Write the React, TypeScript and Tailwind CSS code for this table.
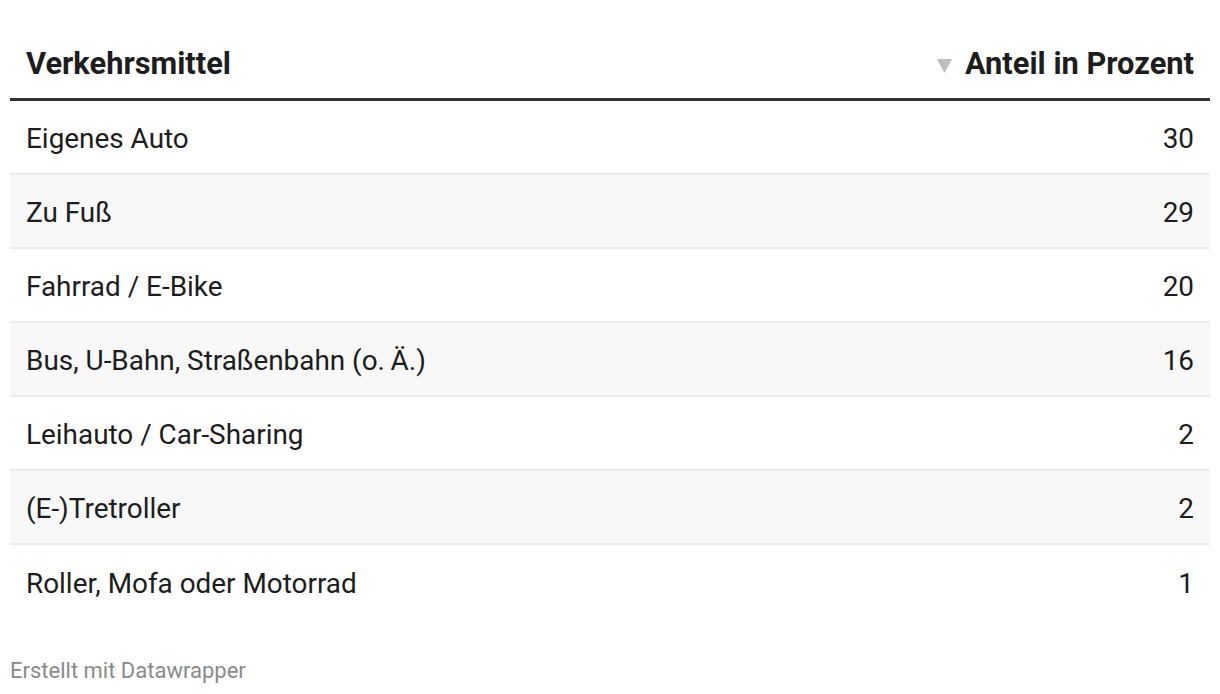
const rows: { name: string; value: number }[] = [
  { name: "Eigenes Auto", value: 30 },
  { name: "Zu Fuß", value: 29 },
  { name: "Fahrrad / E-Bike", value: 20 },
  { name: "Bus, U-Bahn, Straßenbahn (o.\u2009Ä.)", value: 16 },
  { name: "Leihauto / Car-Sharing", value: 2 },
  { name: "(E-)Tretroller", value: 2 },
  { name: "Roller, Mofa oder Motorrad", value: 1 },
];

export default function App() {
  return (
    <div className="min-h-screen bg-white px-[10px] font-['Roboto','Liberation_Sans',sans-serif] text-[#1d1d1d]">
      <div className="flex items-center justify-between border-b-[3px] border-[#333333] px-4 pt-[46px] pb-[16px] text-[30.8px] leading-[36px] font-bold">
        <span>Verkehrsmittel</span>
        <span className="flex items-center gap-[13px]">
          <svg width="15" height="14" viewBox="0 0 15 14" className="mt-[4px]">
            <polygon points="0,0 15,0 7.5,14" fill="#bdbdbd" />
          </svg>
          Anteil in Prozent
        </span>
      </div>
      <div>
        {rows.map((r, i) => (
          <div
            key={r.name}
            className={`flex h-[74px] items-center justify-between px-4 pt-[3px] text-[27.9px] ${
              i % 2 === 1 ? "bg-[#f8f8f8]" : "bg-white"
            } ${i < rows.length - 1 ? "border-b-2 border-[#ececec]" : ""}`}
          >
            <span>{r.name}</span>
            <span>{r.value}</span>
          </div>
        ))}
      </div>
      <div className="mt-[38px] text-[22px] leading-[28px] text-[#8a8a8a]">
        Erstellt mit Datawrapper
      </div>
    </div>
  );
}
